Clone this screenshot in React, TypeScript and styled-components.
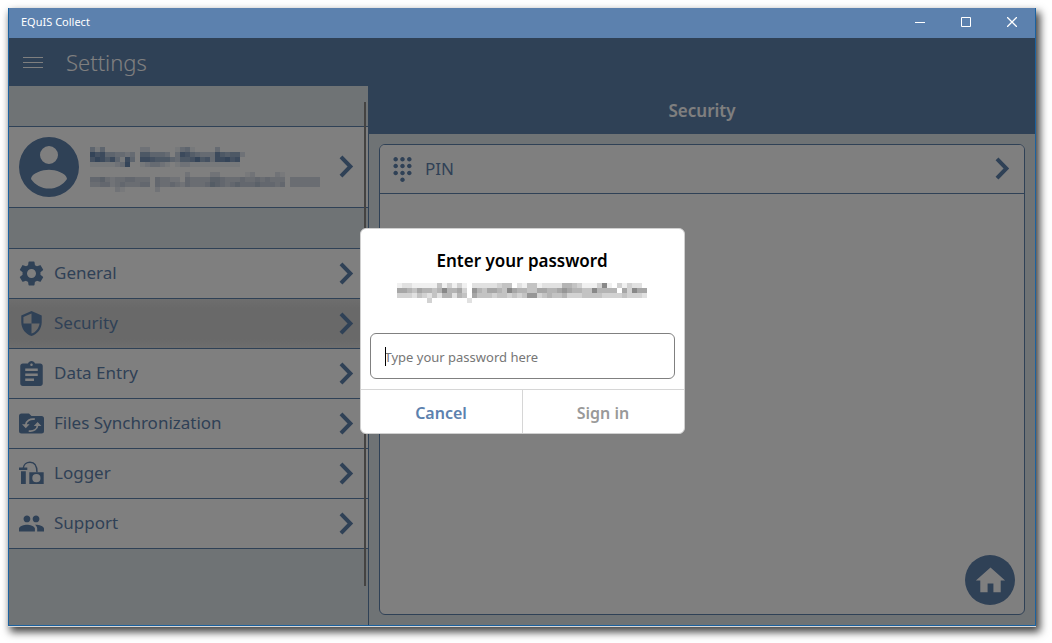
import React from "react";
import styled, { createGlobalStyle } from "styled-components";
import { MdAssignment, MdDialpad, MdHome, MdPeople, MdSettings } from "react-icons/md";

const navy = "#5f82ad";
const font = '"Segoe UI", "Noto Sans", "Open Sans", sans-serif';

const GlobalStyle = createGlobalStyle`
  * { box-sizing: border-box; }
  body { margin: 0; background: #fff; font-family: ${font}; }
  button, input { font-family: inherit; margin: 0; padding: 0; border: 0; background: none; }
  button { cursor: pointer; }
  h1, h2, p { margin: 0; }
`;

const Page = styled.div`
  display: flex;
  min-height: 100vh;
  padding: 8px 16px 17px 8px;
`;

const Window = styled.div`
  flex: 1;
  display: flex;
  flex-direction: column;
  border: 1px solid #1b62a0;
  border-top: 0;
  box-shadow: 0 1px 0 #d8d8d8, 3px 5px 8px 1px rgba(0, 0, 0, 0.75);
`;

const TitleBar = styled.div`
  display: flex;
  align-items: center;
  height: 30px;
  padding-left: 12px;
  background: #5c81ae;
  color: #fff;
  font-size: 11px;
  line-height: 16px;
`;

const WindowTitle = styled.span`
  flex: 1;
  padding-bottom: 2px;
`;

const WindowButton = styled.button`
  display: flex;
  align-items: center;
  justify-content: center;
  width: 46px;
  height: 28px;
  margin-bottom: 2px;
`;

const Client = styled.div`
  position: relative;
  flex: 1;
  display: flex;
  flex-direction: column;
  background: #dfe6ea;
`;

const Header = styled.header`
  display: flex;
  align-items: center;
  gap: 23px;
  height: 48px;
  padding-left: 14px;
  background: ${navy};
  color: #fff;
`;

const MenuButton = styled.button`
  display: flex;
  width: 20px;
  height: 20px;
`;

const PageTitle = styled.h1`
  font-size: 22px;
  line-height: 30px;
  font-weight: 300;
`;

const Columns = styled.div`
  flex: 1;
  display: flex;
`;

const Sidebar = styled.aside`
  position: relative;
  flex: 0 0 360px;
  padding-top: 40px;
  border-right: 1px solid ${navy};
`;

const Account = styled.button`
  display: flex;
  align-items: center;
  gap: 11px;
  width: 100%;
  height: 82px;
  padding: 0 14px 0 10px;
  border-top: 1px solid ${navy};
  border-bottom: 1px solid ${navy};
  background: #fff;
`;

const AccountText = styled.span`
  flex: 1;
  display: flex;
  flex-direction: column;
  gap: 5px;
  padding-top: 5px;
`;

const Nav = styled.nav`
  margin-top: 40px;
  border-top: 1px solid ${navy};
`;

const Row = styled.button<{ $active?: boolean }>`
  display: flex;
  align-items: center;
  gap: 10px;
  width: 100%;
  height: 50px;
  padding: 0 14px 0 10px;
  border-bottom: 1px solid ${navy};
  background: ${(p) => (p.$active ? "linear-gradient(#dcdcdc, #d2d2d2 20%, #d2d2d2 80%, #dcdcdc)" : "#fff")};
  color: ${navy};
  font-size: 17px;
  line-height: 24px;
  text-align: left;
`;

const CardRow = styled(Row)`
  height: 49px;
`;

const RowLabel = styled.span`
  flex: 1;
  padding-bottom: 1px;
`;

const ScrollThumb = styled.div`
  position: absolute;
  top: 16px;
  right: 2px;
  bottom: 39px;
  width: 2px;
  background: #888684;
`;

const Main = styled.main`
  position: relative;
  flex: 1;
  display: flex;
  flex-direction: column;
`;

const SectionTitle = styled.h2`
  height: 48px;
  background: ${navy};
  color: #fff;
  font-size: 17px;
  line-height: 50px;
  font-weight: 600;
  text-align: center;
`;

const Card = styled.div`
  flex: 1;
  margin: 10px;
  border: 1px solid ${navy};
  border-radius: 6px;
  background: #fff;
  overflow: hidden;
`;

const HomeButton = styled.button`
  position: absolute;
  right: 20px;
  bottom: 20px;
  display: flex;
  align-items: center;
  justify-content: center;
  width: 50px;
  height: 50px;
  border-radius: 50%;
  background: ${navy};
  color: #fff;
`;

const Overlay = styled.div`
  position: absolute;
  inset: 0;
  display: flex;
  align-items: center;
  justify-content: center;
  padding-bottom: 2px;
  background: rgba(0, 0, 0, 0.5);
`;

const Dialog = styled.form`
  display: flex;
  flex-direction: column;
  width: 325px;
  border: 1px solid #d0d0d0;
  border-radius: 6px;
  background: #fff;
  overflow: hidden;
`;

const DialogBody = styled.div`
  display: flex;
  flex-direction: column;
  align-items: center;
  gap: 10px;
  padding: 20px 9px 10px;
`;

const DialogTitle = styled.h2`
  font-size: 17px;
  line-height: 24px;
  font-weight: 600;
  color: #000;
`;

const Field = styled.label`
  position: relative;
  width: 100%;
  margin-top: 20px;

  &::after {
    content: "";
    position: absolute;
    left: 15px;
    top: 14px;
    width: 1px;
    height: 19px;
    background: #000;
  }
`;

const PasswordInput = styled.input`
  display: block;
  width: 100%;
  height: 46px;
  padding: 2px 14px 0;
  border: 1px solid #808080;
  border-radius: 6px;
  font-size: 13px;
  caret-color: transparent;
  outline: none;

  &::placeholder { color: #767676; opacity: 1; }
`;

const DialogActions = styled.div`
  display: flex;
  border-top: 1px solid #d6d6d6;
`;

const DialogButton = styled.button<{ $muted?: boolean }>`
  flex: 1;
  height: 43px;
  padding-top: 3px;
  color: ${(p) => (p.$muted ? "#999" : "#5c81ae")};
  font-size: 16px;
  line-height: 24px;
  font-weight: 600;

  & + & { border-left: 1px solid #d6d6d6; }
`;

/* Each digit is the strength of one 5px tile. */
function Mosaic({ rows, color, label }: { rows: string[]; color: string; label: string }) {
  const cols = Math.max(...rows.map((r) => r.length));
  return (
    <svg width={cols * 5} height={rows.length * 5} role="img" aria-label={label} shapeRendering="crispEdges">
      {rows.flatMap((row, y) =>
        row.split("").map((d, x) =>
          d === "0" ? null : (
            <rect key={`${x}-${y}`} x={x * 5} y={y * 5} width="5" height="5" fill={color} opacity={Number(d) / 10} />
          )
        )
      )}
    </svg>
  );
}

const nameTiles = [
  "4140000000220000013410000300000",
  "9784433230664443038754333865662",
  "7986841840887666436679673889780",
  "1111123900123321012211111111110",
];

const mailTiles = [
  "0000000000000000000200002200000120000210000000",
  "4453233443330433220433335543334334343330333333",
  "3344234333440433432433346543454445444340333333",
  "0000021000000200000000000000000000000000000000",
];

const dialogTiles = [
  "12211111413131022222344021441222255431113810313220",
  "66546554585563075466548655446655676554485555063866",
  "33324324255254064443443434773454453334444333343332",
  "00000030000000200000000000000000000000000000000000",
];

const Chevron = () => (
  <svg width="15" height="24" viewBox="0 0 15 24" fill="none" stroke={navy} strokeWidth="4">
    <path d="M2 1.8 11.4 11.5 2 21.2" />
  </svg>
);

const Avatar = () => (
  <svg width="60" height="60" viewBox="2 2 20 20" fill={navy}>
    <path d="M12 2a10 10 0 1 0 0 20 10 10 0 0 0 0-20zm0 3a3 3 0 1 1 0 6 3 3 0 0 1 0-6zm0 14.2c-2.5 0-4.71-1.28-6-3.2.03-2 4-3.1 6-3.1s5.97 1.1 6 3.1c-1.29 1.92-3.5 3.2-6 3.2z" />
  </svg>
);

const Shield = () => (
  <svg width="25" height="25" viewBox="1 1 22 22" fill={navy}>
    <path fillRule="evenodd" d="M12 1 3 5v6c0 5.55 3.84 10.74 9 12 5.16-1.26 9-6.45 9-12V5zM12 3.1V12H19.1c-.6 4.1-3.3 7.8-7.1 8.9V12H4.9V6.2z" />
  </svg>
);

const FolderSync = () => (
  <svg width="25" height="25" viewBox="0 0 25 25">
    <path fill={navy} d="M2.5 2.5H10l2.5 2.5h10A2.5 2.5 0 0 1 25 7.5V20a2.5 2.5 0 0 1-2.5 2.5h-20A2.5 2.5 0 0 1 0 20V5a2.5 2.5 0 0 1 2.5-2.5z" />
    <path fill="none" stroke="#fff" strokeWidth="1.7" d="M15.8 8.2C11.2 7.4 7 10 6.8 14M9.7 20c4.6.8 8.7-1.8 8.9-5.8" />
    <path fill="#fff" d="M3 13.3h7.6L6.8 17.3zM14.8 14.9h7.6l-3.8-4z" />
  </svg>
);

const LoggerIcon = () => (
  <svg width="25" height="25" viewBox="0 0 25 25" fill={navy}>
    <path d="M0 6.5h8.3V9H0zM2 10.3h4.8V23H2z" />
    <path fillRule="evenodd" d="M10.3 11.3h14.4V23H10.3zM17.4 13.1a4.1 4.1 0 1 0 0 8.2 4.1 4.1 0 0 0 0-8.2z" />
    <path fill="none" stroke={navy} strokeWidth="1.4" d="M4.3 7C4.6 3.5 7.6 1.2 11 1.2c4.3 0 7 3.5 7 10.1" />
  </svg>
);

const items = [
  { label: "General", icon: <MdSettings size={25} viewBox="2 2 20 20" /> },
  { label: "Security", icon: <Shield />, active: true },
  { label: "Data Entry", icon: <MdAssignment size={25} viewBox="2 1 20 20" /> },
  { label: "Files Synchronization", icon: <FolderSync /> },
  { label: "Logger", icon: <LoggerIcon /> },
  { label: "Support", icon: <MdPeople size={25} viewBox="1 1 22 22" /> },
];

export default function App() {
  return (
    <Page>
      <GlobalStyle />
      <Window>
        <TitleBar>
          <WindowTitle>EQuIS Collect</WindowTitle>
          <WindowButton aria-label="Minimize">
            <svg width="10" height="10" stroke="#fff"><path d="M0 5.5h10" /></svg>
          </WindowButton>
          <WindowButton aria-label="Maximize">
            <svg width="10" height="10" stroke="#fff" fill="none"><path d="M.5.5h9v9h-9z" /></svg>
          </WindowButton>
          <WindowButton aria-label="Close">
            <svg width="10" height="10" stroke="#fff" strokeWidth="1.3"><path d="M0 0l10 10M10 0 0 10" /></svg>
          </WindowButton>
        </TitleBar>
        <Client>
          <Header>
            <MenuButton aria-label="Menu">
              <svg width="20" height="20" stroke="#fff"><path d="M0 5.5h20M0 10.5h20M0 15.5h20" /></svg>
            </MenuButton>
            <PageTitle>Settings</PageTitle>
          </Header>
          <Columns>
            <Sidebar>
              <Account>
                <Avatar />
                <AccountText>
                  <Mosaic rows={nameTiles} color="#587ba8" label="Account name" />
                  <Mosaic rows={mailTiles} color="#7088a8" label="Account email" />
                </AccountText>
                <Chevron />
              </Account>
              <Nav>
                {items.map((item) => (
                  <Row key={item.label} $active={item.active}>
                    {item.icon}
                    <RowLabel>{item.label}</RowLabel>
                    <Chevron />
                  </Row>
                ))}
              </Nav>
              <ScrollThumb />
            </Sidebar>
            <Main>
              <SectionTitle>Security</SectionTitle>
              <Card>
                <CardRow>
                  <MdDialpad size={25} viewBox="1 1 22 22" />
                  <RowLabel>PIN</RowLabel>
                  <Chevron />
                </CardRow>
              </Card>
              <HomeButton aria-label="Home">
                <MdHome size={35} />
              </HomeButton>
            </Main>
          </Columns>
          <Overlay>
            <Dialog role="dialog" aria-labelledby="dialog-title" onSubmit={(e) => e.preventDefault()}>
              <DialogBody>
                <DialogTitle id="dialog-title">Enter your password</DialogTitle>
                <Mosaic rows={dialogTiles} color="#6a6a6a" label="Account email" />
                <Field>
                  <PasswordInput type="password" aria-label="Password" placeholder="Type your password here" />
                </Field>
              </DialogBody>
              <DialogActions>
                <DialogButton type="button">Cancel</DialogButton>
                <DialogButton type="submit" $muted>Sign in</DialogButton>
              </DialogActions>
            </Dialog>
          </Overlay>
        </Client>
      </Window>
    </Page>
  );
}
